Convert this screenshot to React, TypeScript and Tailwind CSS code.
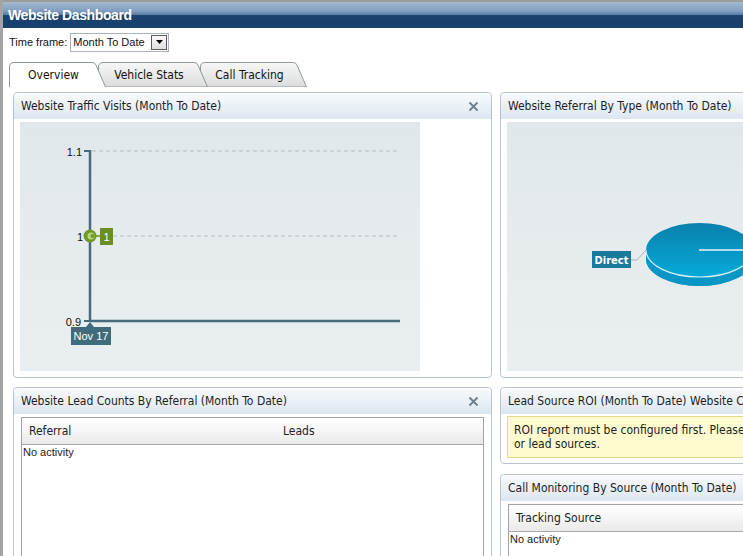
import React from "react";

const tahoma = "font-['DejaVu_Sans_Condensed','DejaVu_Sans',sans-serif]";
const arial = "font-['Liberation_Sans',Arial,sans-serif]";

function CloseX() {
  return (
    <svg width="11" height="11" viewBox="0 0 11 11" className="shrink-0">
      <path d="M1.5 1.5 L9.5 9.5 M9.5 1.5 L1.5 9.5" stroke="#6e7d8c" strokeWidth="1.8" />
    </svg>
  );
}

function Panel({
  title,
  closable,
  className,
  children,
}: {
  title: string;
  closable?: boolean;
  className?: string;
  children: React.ReactNode;
}) {
  return (
    <div className={`flex flex-col rounded-[4px] border border-[#b9c4cf] bg-white ${className ?? ""}`}>
      <div className="flex h-[26px] shrink-0 items-center justify-between rounded-t-[4px] bg-[linear-gradient(#f8fafd,#e9eff6_55%,#dce6f0)] pl-[7px] pr-[12px]">
        <span className={`${tahoma} whitespace-nowrap text-[12px] text-[#1e1e1e]`}>{title}</span>
        {closable && <CloseX />}
      </div>
      {children}
    </div>
  );
}

function Tab({ label, width, active, z }: { label: string; width: number; active?: boolean; z: string }) {
  const w = width;
  const d = `M0.5,25 L0.5,5 Q0.5,0.5 5,0.5 L${w - 14},0.5 Q${w - 11},0.5 ${w - 10},3 L${w - 0.5},25`;
  return (
    <div className={`relative -mr-[8px] h-[25px] ${z}`} style={{ width: w }}>
      <svg width={w} height={25} className="absolute left-0 top-0">
        <defs>
          <linearGradient id="tabg" x1="0" y1="0" x2="0" y2="1">
            <stop offset="0" stopColor="#f7f7f7" />
            <stop offset="1" stopColor="#dcdcdc" />
          </linearGradient>
        </defs>
        <path d={d + " Z"} fill={active ? "#ffffff" : "url(#tabg)"} />
        <path d={active ? d : d + " Z"} fill="none" stroke="#8f999b" />
      </svg>
      <span
        className={`${tahoma} relative flex h-full items-center justify-center pr-[8px] text-[12px] text-[#111]`}
      >
        {label}
      </span>
    </div>
  );
}

function TrafficChart() {
  return (
    <div className="h-[249px] w-[400px] bg-[linear-gradient(#e0e7ea,#e6ecee_50%,#e9eef0)]">
      <svg width="400" height="249" className={arial}>
        <line x1="72" y1="29" x2="380" y2="29" stroke="#b3bcc1" strokeDasharray="4 3" />
        <line x1="72" y1="114" x2="380" y2="114" stroke="#b3bcc1" strokeDasharray="4 3" />
        <line x1="64" y1="29" x2="71" y2="29" stroke="#456b7c" strokeWidth="2" />
        <line x1="64" y1="199" x2="71" y2="199" stroke="#456b7c" strokeWidth="2" />
        <line x1="70" y1="28" x2="70" y2="200" stroke="#456b7c" strokeWidth="2.5" />
        <line x1="70" y1="199" x2="380" y2="199" stroke="#456b7c" strokeWidth="2.5" />
        <text x="62" y="34" textAnchor="end" fontSize="11" fill="#111">1.1</text>
        <text x="63" y="119" textAnchor="end" fontSize="11" fill="#111">1</text>
        <text x="61" y="204" textAnchor="end" fontSize="11" fill="#111">0.9</text>
        <line x1="74" y1="114" x2="82" y2="114" stroke="#6b8e23" strokeWidth="1.5" />
        <rect x="80" y="106" width="13" height="17" fill="#6b8e23" />
        <text x="86.5" y="119" textAnchor="middle" fontSize="11" fill="#fff">1</text>
        <circle cx="70" cy="114" r="6.5" fill="#6f9a22" />
        <circle cx="71" cy="114" r="3.5" fill="#b9d37e" />
        <circle cx="72.5" cy="114" r="2" fill="#6f9a22" />
        <path d="M51,205 L66,205 L70,200 L74,205 L91,205 L91,223 L51,223 Z" fill="#3f6b7b" />
        <text x="71" y="218" textAnchor="middle" fontSize="11" fill="#fff">Nov 17</text>
      </svg>
    </div>
  );
}

function ReferralChart() {
  return (
    <div className="h-[249px] w-[300px] bg-[linear-gradient(#e0e7ea,#e6ecee_50%,#e9eef0)]">
      <svg width="300" height="249" className={tahoma}>
        <defs>
          <linearGradient id="pietop" x1="0" y1="0" x2="0" y2="1">
            <stop offset="0" stopColor="#0a80ad" />
            <stop offset="1" stopColor="#05aad9" />
          </linearGradient>
        </defs>
        <path d="M139,128 L139,137 A53.5,27 0 0 0 246,137 L246,128 Z" fill="#0896c6" />
        <ellipse cx="192.5" cy="137" rx="53.5" ry="27" fill="#0896c6" />
        <ellipse cx="192.5" cy="128" rx="53.5" ry="27" fill="url(#pietop)" />
        <path d="M139,128 A53.5,27 0 0 0 246,128" fill="none" stroke="#d9f1fa" strokeWidth="1.2" />
        <line x1="192" y1="128" x2="250" y2="128" stroke="#e6f6fb" strokeWidth="1.5" />
        <path d="M124,138 L130,138 L139,128" fill="none" stroke="#a9b3b8" />
        <rect x="85" y="129" width="39" height="17" fill="#1a7a9c" />
        <text x="104.5" y="141.5" textAnchor="middle" fontSize="11" fontWeight="bold" fill="#fff">
          Direct
        </text>
      </svg>
    </div>
  );
}

function Table({ cols, widths }: { cols: string[]; widths: string[] }) {
  return (
    <div className="flex-1 border border-b-0 border-[#a3a3a3]">
      <div className="flex h-[27px] items-center border-b border-[#a8a8a8] bg-[linear-gradient(#ffffff,#f3f3f3_60%,#e9e9e9)]">
        {cols.map((c, i) => (
          <div key={c} className={`${tahoma} ${widths[i]} whitespace-nowrap pl-[7px] text-[12px] text-[#222]`}>
            {c}
          </div>
        ))}
      </div>
      <div className={`${arial} pl-[1px] text-[11px] leading-[15px] text-[#222]`}>No activity</div>
    </div>
  );
}

export default function App() {
  return (
    <div className="relative flex h-[556px] w-[743px] overflow-hidden border-l-[3px] border-[#a4a4a4] bg-white">
      <div className="flex min-w-0 flex-1 flex-col">
        <div className="h-[2px] shrink-0 bg-[#9c9c9c]" />
        <div className="flex h-[26px] shrink-0 items-center bg-[linear-gradient(#a6bad1,#7f9dbf_35%,#5b7fa7_48%,#1b4270_52%,#17406c)] pl-[5px]">
          <span className={`${arial} text-[14px] font-bold tracking-[-0.4px] text-white`}>Website Dashboard</span>
        </div>

        <div className="flex flex-col pl-[6px] pt-[5px]">
          <div className="flex h-[18px] items-center gap-[3px]">
            <span className={`${arial} text-[11px] text-[#111]`}>Time frame:</span>
            <div className="flex h-[19px] w-[99px] items-center justify-between border border-[#a9b2bc] bg-white pl-[2px] pr-[1px]">
              <span className={`${arial} text-[11px] text-[#111]`}>Month To Date</span>
              <div className="flex h-[15px] w-[16px] items-center justify-center border border-[#5b5b5b] bg-[linear-gradient(#fafafa,#dedede)]">
                <svg width="7" height="4" viewBox="0 0 7 4">
                  <path d="M0 0 L7 0 L3.5 4 Z" fill="#000" />
                </svg>
              </div>
            </div>
          </div>

          <div className="mt-[11px] flex h-[25px]">
            <Tab label="Overview" width={97} active z="z-30" />
            <Tab label="Vehicle Stats" width={110} z="z-20" />
            <Tab label="Call Tracking" width={107} z="z-10" />
          </div>

          <div className="ml-[4px] mt-[5px] flex gap-[8px]">
            <div className="flex w-[479px] shrink-0 flex-col gap-[9px]">
              <Panel title="Website Traffic Visits (Month To Date)" closable className="h-[286px]">
                <div className="px-[6px] pt-[3px]">
                  <TrafficChart />
                </div>
              </Panel>
              <Panel title="Website Lead Counts By Referral (Month To Date)" closable className="h-[200px]">
                <div className="flex flex-1 flex-col px-[7px] pt-[3px]">
                  <Table cols={["Referral", "Leads"]} widths={["w-[254px]", "flex-1"]} />
                </div>
              </Panel>
            </div>

            <div className="flex w-[320px] shrink-0 flex-col">
              <Panel title="Website Referral By Type (Month To Date)" className="h-[286px]">
                <div className="px-[6px] pt-[3px]">
                  <ReferralChart />
                </div>
              </Panel>
              <Panel title="Lead Source ROI (Month To Date) Website Chat" className="mt-[9px] h-[77px]">
                <div className="px-[6px] pt-[2px]">
                  <div
                    className={`${tahoma} h-[42px] border border-[#e5da8c] bg-[#fffbcf] pl-[6px] pt-[6px] text-[12px] leading-[14px] text-[#222]`}
                  >
                    <div className="whitespace-nowrap">ROI report must be configured first. Please configure costs</div>
                    <div className="whitespace-nowrap">or lead sources.</div>
                  </div>
                </div>
              </Panel>
              <Panel title="Call Monitoring By Source (Month To Date)" className="mt-[10px] h-[120px]">
                <div className="flex flex-1 flex-col px-[7px] pt-[3px]">
                  <Table cols={["Tracking Source", "Calls"]} widths={["w-[254px]", "flex-1"]} />
                </div>
              </Panel>
            </div>
          </div>
        </div>
      </div>
    </div>
  );
}
